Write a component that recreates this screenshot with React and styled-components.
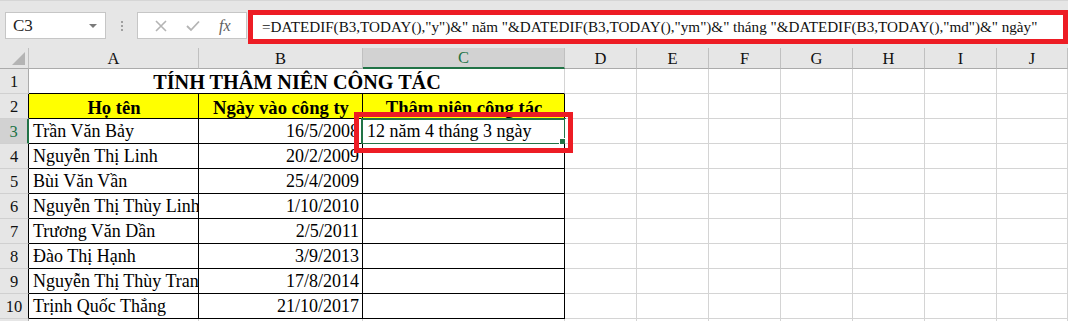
import React from "react";
import styled, { createGlobalStyle, css } from "styled-components";

const SERIF = `"Liberation Serif", "Tinos", "Times New Roman", "DejaVu Serif", serif`;

const GlobalStyle = createGlobalStyle`
  html, body { margin: 0; padding: 0; background: #ffffff; overflow: hidden; }
  body { font-family: ${SERIF}; }
  * { box-sizing: border-box; }
`;

const Page = styled.div`
  width: 1068px;
  height: 321px;
  overflow: hidden;
  background: #ffffff;
  font-family: ${SERIF};
`;

const Toolbar = styled.div`
  display: flex;
  align-items: flex-start;
  height: 48px;
  background: #e6e6e6;
  border-top: 1px solid #d6d6d6;
  padding-top: 9px;
`;

const NameBox = styled.div`
  position: relative;
  margin-left: 5px;
  margin-top: 2px;
  width: 101px;
  height: 27px;
  background: #ffffff;
  border: 1px solid #c6c6c6;
  display: flex;
  align-items: center;
  padding-left: 7px;
  font-family: ${SERIF};
  font-size: 17px;
  color: #222;
`;

const DropArrow = styled.span`
  position: absolute;
  right: 8px;
  top: 11px;
  width: 0;
  height: 0;
  border-left: 4px solid transparent;
  border-right: 4px solid transparent;
  border-top: 4px solid #7a7a7a;
`;

const Dots = styled.div`
  width: 31px;
  height: 27px;
  margin-top: 2px;
  display: flex;
  flex-direction: column;
  align-items: center;
  justify-content: center;
  gap: 2px;
  span {
    width: 2px;
    height: 2px;
    background: #a0a0a0;
  }
`;

const FxBox = styled.div`
  margin-top: 2px;
  width: 110px;
  height: 27px;
  background: #ffffff;
  border: 1px solid #c6c6c6;
  display: flex;
  align-items: center;
  justify-content: space-around;
  padding: 0 6px 0 8px;
  color: #b0b0b0;
`;

const FxLabel = styled.span`
  font-family: ${SERIF};
  font-style: italic;
  font-size: 16px;
  color: #606060;
`;

const FormulaInput = styled.div`
  flex: 1;
  margin-left: 1px;
  height: 34px;
  background: #ffffff;
  border: 5px solid #ed1c24;
  display: flex;
  align-items: center;
  padding-left: 9px;
  padding-bottom: 1px;
  font-family: ${SERIF};
  font-size: 15.15px;
  color: #111;
  white-space: nowrap;
  overflow: hidden;
`;

const Sheet = styled.div`
  display: grid;
  grid-template-columns: 29px 170px 164px 202px 72px 72px 72px 72px 72px 72px 71px;
  grid-template-rows: 21px repeat(11, 25px);
  font-family: ${SERIF};
`;

const Corner = styled.div`
  position: relative;
  background: #e6e6e6;
  border-right: 1px solid #c0c0c0;
  border-bottom: 1px solid #ababab;
  &::after {
    content: "";
    position: absolute;
    right: 3px;
    bottom: 3px;
    width: 0;
    height: 0;
    border-left: 13px solid transparent;
    border-bottom: 13px solid #b4b4b4;
  }
`;

const ColHead = styled.div`
  background: ${(p) => (p.$active ? "#d2d2d2" : "#e6e6e6")};
  color: ${(p) => (p.$active ? "#217346" : "#111")};
  border-right: 1px solid #c0c0c0;
  border-bottom: ${(p) => (p.$active ? "2px solid #217346" : "1px solid #ababab")};
  display: flex;
  align-items: center;
  justify-content: center;
  font-size: 16.5px;
  padding-top: 1px;
`;

const RowHead = styled.div`
  background: ${(p) => (p.$active ? "#d2d2d2" : "#e6e6e6")};
  color: ${(p) => (p.$active ? "#217346" : "#111")};
  border-right: ${(p) =>
    p.$active ? "2px solid #217346" : p.$table ? "1px solid #000" : "1px solid #ababab"};
  border-bottom: 1px solid #d0d0d0;
  display: flex;
  align-items: center;
  justify-content: center;
  font-size: 16.5px;
  padding-top: 2px;
`;

const Cell = styled.div`
  position: relative;
  border-right: 1px solid ${(p) => (p.$br ? "#000" : "#d4d4d4")};
  border-bottom: 1px solid ${(p) => (p.$bb ? "#000" : "#d4d4d4")};
  background: ${(p) => (p.$yellow ? "#ffff00" : "#ffffff")};
  grid-column: ${(p) => (p.$span ? `span ${p.$span}` : "auto")};
  display: flex;
  align-items: flex-end;
  justify-content: ${(p) =>
    p.$align === "right" ? "flex-end" : p.$align === "center" ? "center" : "flex-start"};
  padding: 0 3px 1px 4px;
  font-size: 18px;
  line-height: 21px;
  font-weight: ${(p) => (p.$bold ? 700 : 400)};
  color: #000;
  white-space: nowrap;
  overflow: ${(p) => (p.$selected ? "visible" : "hidden")};
  ${(p) =>
    p.$bold &&
    css`
      font-size: 18.6px;
      padding-bottom: 0;
    `}
  ${(p) =>
    p.$title &&
    css`
      font-size: 20.2px;
      padding-bottom: 0;
    `}
`;

const Selection = styled.div`
  position: absolute;
  left: -2px;
  top: -1px;
  width: 205px;
  height: 27px;
  border: 2px solid #217346;
  pointer-events: none;
  &::after {
    content: "";
    position: absolute;
    right: -4px;
    bottom: -4px;
    width: 7px;
    height: 7px;
    background: #217346;
    border: 1px solid #ffffff;
  }
`;

const Highlight = styled.div`
  position: absolute;
  left: -9px;
  top: -7px;
  width: 219px;
  height: 41px;
  border: 5px solid #ed1c24;
  pointer-events: none;
  z-index: 2;
`;

const XIcon = () => (
  <svg width="12" height="12" viewBox="0 0 12 12">
    <path d="M1 1 L11 11 M11 1 L1 11" stroke="#b4b4b4" strokeWidth="1.6" fill="none" />
  </svg>
);

const CheckIcon = () => (
  <svg width="14" height="12" viewBox="0 0 14 12">
    <path d="M1 6 L5 10 L13 1.5" stroke="#b4b4b4" strokeWidth="1.8" fill="none" />
  </svg>
);

const cols = ["A", "B", "C", "D", "E", "F", "G", "H", "I", "J"];

const people = [
  ["Trần Văn Bảy", "16/5/2008"],
  ["Nguyễn Thị Linh", "20/2/2009"],
  ["Bùi Văn Vần", "25/4/2009"],
  ["Nguyễn Thị Thùy Linh", "1/10/2010"],
  ["Trương Văn Dần", "2/5/2011"],
  ["Đào Thị Hạnh", "3/9/2013"],
  ["Nguyễn Thị Thùy Trang", "17/8/2014"],
  ["Trịnh Quốc Thắng", "21/10/2017"],
];

const formula =
  '=DATEDIF(B3,TODAY(),"y")&" năm "&DATEDIF(B3,TODAY(),"ym")&" tháng "&DATEDIF(B3,TODAY(),"md")&" ngày"';

const EmptyCells = ({ row, n = 7 }) =>
  Array.from({ length: n }, (_, i) => <Cell key={`${row}-e${i}`} />);

export default function App() {
  return (
    <Page>
      <GlobalStyle />
      <Toolbar>
        <NameBox>
          C3
          <DropArrow />
        </NameBox>
        <Dots>
          <span />
          <span />
          <span />
        </Dots>
        <FxBox>
          <XIcon />
          <CheckIcon />
          <FxLabel>fx</FxLabel>
        </FxBox>
        <FormulaInput>{formula}</FormulaInput>
      </Toolbar>
      <Sheet>
        <Corner />
        {cols.map((c) => (
          <ColHead key={c} $active={c === "C"}>
            {c}
          </ColHead>
        ))}

        <RowHead>1</RowHead>
        <Cell $span={3} $bb $align="center" $bold $title>
          TÍNH THÂM NIÊN CÔNG TÁC
        </Cell>
        <EmptyCells row={1} />

        <RowHead $table>2</RowHead>
        <Cell $yellow $bold $br $bb $align="center">Họ tên</Cell>
        <Cell $yellow $bold $br $bb $align="center">Ngày vào công ty</Cell>
        <Cell $yellow $bold $br $bb $align="center">Thâm niên công tác</Cell>
        <EmptyCells row={2} />

        {people.map(([name, date], i) => {
          const r = i + 3;
          const sel = r === 3;
          return (
            <React.Fragment key={r}>
              <RowHead $table $active={sel}>{r}</RowHead>
              <Cell $br $bb>{name}</Cell>
              <Cell $br $bb $align="right">{date}</Cell>
              <Cell $br $bb $selected={sel}>
                {sel && "12 năm 4 tháng 3 ngày"}
                {sel && <Selection />}
                {sel && <Highlight />}
              </Cell>
              <EmptyCells row={r} />
            </React.Fragment>
          );
        })}

        <RowHead />
        <EmptyCells row={11} n={10} />
      </Sheet>
    </Page>
  );
}
